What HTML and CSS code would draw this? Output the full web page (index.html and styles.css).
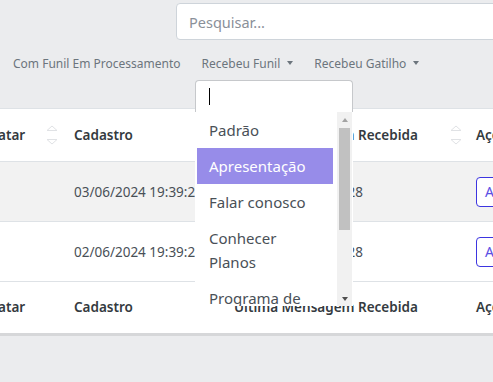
FILE: index.html
```html
<!DOCTYPE html>
<html lang="pt-BR">
<head>
	<meta charset="UTF-8">
	<title>Leads</title>
	<link rel="stylesheet" href="styles.css">
</head>
<body>
	<div class="page">
		<div class="topbar">
			<input class="search" type="text" placeholder="Pesquisar...">
		</div>
		<div class="filters">
			<a class="filter">Com Funil Em Processamento</a>
			<a class="filter toggle">Recebeu Funil</a>
			<a class="filter toggle">Recebeu Gatilho</a>
		</div>
		<div class="panel">
			<table class="leads">
				<thead>
					<tr>
						<th class="col-a"><div class="th-in">Contatar<svg class="sort" width="12" height="20" viewBox="0 0 12 20"><path d="M1 5.5 L6 1 L11 5.5 Z" /><path d="M1 14.5 L6 19 L11 14.5 Z" /></svg></div></th>
						<th class="col-b"><div class="th-in">Cadastro</div></th>
						<th class="col-c"><div class="th-in">Ultima Mensagem Recebida<svg class="sort" width="12" height="20" viewBox="0 0 12 20"><path d="M1 5.5 L6 1 L11 5.5 Z" /><path d="M1 14.5 L6 19 L11 14.5 Z" /></svg></div></th>
						<th class="col-d"><div class="th-in">Ações</div></th>
					</tr>
				</thead>
				<tbody>
					<tr class="row-odd">
						<td></td>
						<td>03/06/2024 19:39:28</td>
						<td>03/06/2024 19:39:28</td>
						<td><button class="btn-outline">Abrir</button></td>
					</tr>
					<tr class="row-even">
						<td></td>
						<td>02/06/2024 19:39:28</td>
						<td>02/06/2024 19:39:28</td>
						<td><button class="btn-outline">Abrir</button></td>
					</tr>
				</tbody>
				<tfoot>
					<tr>
						<th><div class="th-in">Contatar</div></th>
						<th><div class="th-in">Cadastro</div></th>
						<th><div class="th-in">Ultima Mensagem Recebida</div></th>
						<th><div class="th-in">Ações</div></th>
					</tr>
				</tfoot>
			</table>
		</div>

		<!-- dropdown do filtro "Recebeu Funil" -->
		<div class="select-drop">
			<div class="select-search"><span class="caret-line"></span></div>
			<div class="select-body">
				<ul class="select-list">
					<li>Padrão</li>
					<li class="active">Apresentação</li>
					<li>Falar conosco</li>
					<li>Conhecer Planos</li>
					<li>Programa de Indicação</li>
					<li>Suporte</li>
					<li>Cancelamento</li>
				</ul>
				<div class="scroll">
					<span class="arrow up"></span>
					<div class="track"><span class="thumb"></span></div>
					<span class="arrow down"></span>
				</div>
			</div>
		</div>
	</div>
</body>
</html>
```

FILE: styles.css
```css
*{
	box-sizing: border-box;
}
html, body{
	margin: 0;
	overflow: hidden;
}
body{
	font-family: "Noto Sans", "Open Sans", Arial, sans-serif;
	background-color: #ebecee;
	color: #495057;
}
.page{
	position: relative;
	width: 493px;
	height: 382px;
	overflow: hidden;
}
.topbar{
	padding-top: 3px;
	padding-left: 176px;
}
.search{
	display: block;
	width: 340px;
	height: 37px;
	border: 1px solid #ced4da;
	border-radius: 4px;
	background: #fff;
	padding: 0 12px;
	font-family: inherit;
	font-size: 14.5px;
	color: #495057;
	outline: none;
}
.search::placeholder{
	color: #8a9099;
}
.filters{
	display: flex;
	gap: 21px;
	margin-top: 14px;
	padding-left: 13px;
	height: 20px;
	line-height: 20px;
	font-size: 12px;
	white-space: nowrap;
}
.filter{
	color: #6c757d;
	cursor: pointer;
}
.toggle::after{
	content: "";
	display: inline-block;
	margin-left: 7px;
	vertical-align: 3px;
	border-top: 4px solid #6c757d;
	border-left: 3.5px solid transparent;
	border-right: 3.5px solid transparent;
}
.panel{
	margin-top: 34px;
	background: #fff;
	border-bottom: 3px solid #d6d7d9;
	overflow: hidden;
}
.leads{
	border-collapse: collapse;
	table-layout: fixed;
	margin-left: -45px;
	width: 620px;
	font-size: 13.5px;
	white-space: nowrap;
}
.leads th, .leads td{
	border-top: 1px solid #dee2e6;
	padding: 0 12px;
	text-align: left;
	vertical-align: middle;
	overflow: hidden;
}
.leads th{
	color: #343a40;
	font-weight: 600;
}
.leads thead th{
	height: 53px;
}
.leads tfoot th{
	height: 51px;
}
.leads tbody td{
	height: 60px;
}
.row-odd td{
	background: #f2f2f2;
}
.col-a{ width: 107px; padding-right: 4px !important; }
.col-b{ width: 160px; }
.col-c{ width: 242px; padding-right: 2px !important; }
.col-d{ width: 111px; }
.th-in{
	display: flex;
	align-items: center;
}
.sort{
	margin-left: auto;
	flex: none;
	fill: none;
	stroke: #e0e2e5;
	stroke-width: 1;
}
.btn-outline{
	height: 30px;
	padding: 0 8px;
	border: 1px solid #3d35e0;
	border-radius: 4px;
	background: #fff;
	color: #5a50e4;
	font-family: inherit;
	font-size: 14px;
}

/* dropdown */
.select-drop{
	position: absolute;
	left: 195px;
	top: 80px;
	width: 158px;
}
.select-search{
	height: 32px;
	background: #fff;
	border: 1px solid #c6c8cb;
	border-bottom: none;
	border-radius: 4px 4px 0 0;
	padding: 7px 13px;
}
.caret-line{
	display: block;
	width: 1px;
	height: 17px;
	background: #000;
}
.select-body{
	display: flex;
	height: 194px;
	background: #fff;
	padding-right: 1px;
}
.select-list{
	flex: 1;
	list-style: none;
	margin: 0;
	padding: 0 4px 0 2px;
	overflow: hidden;
	font-size: 15px;
	line-height: 24px;
	color: #495057;
}
.select-list li{
	padding: 6px 12px;
}
.select-list li.active{
	background: #978ce9;
	color: #fff;
}
.scroll{
	width: 15px;
	display: flex;
	flex-direction: column;
	background: #f1f1f1;
}
.arrow{
	height: 15px;
	display: flex;
	align-items: center;
	justify-content: center;
}
.arrow::before{
	content: "";
	border-left: 3.5px solid transparent;
	border-right: 3.5px solid transparent;
}
.arrow.up::before{
	border-bottom: 4px solid #a3a3a3;
}
.arrow.down::before{
	border-top: 4px solid #505050;
}
.track{
	flex: 1;
	padding: 1px 2px 0;
}
.thumb{
	display: block;
	height: 102px;
	background: #c1c1c1;
}
```
